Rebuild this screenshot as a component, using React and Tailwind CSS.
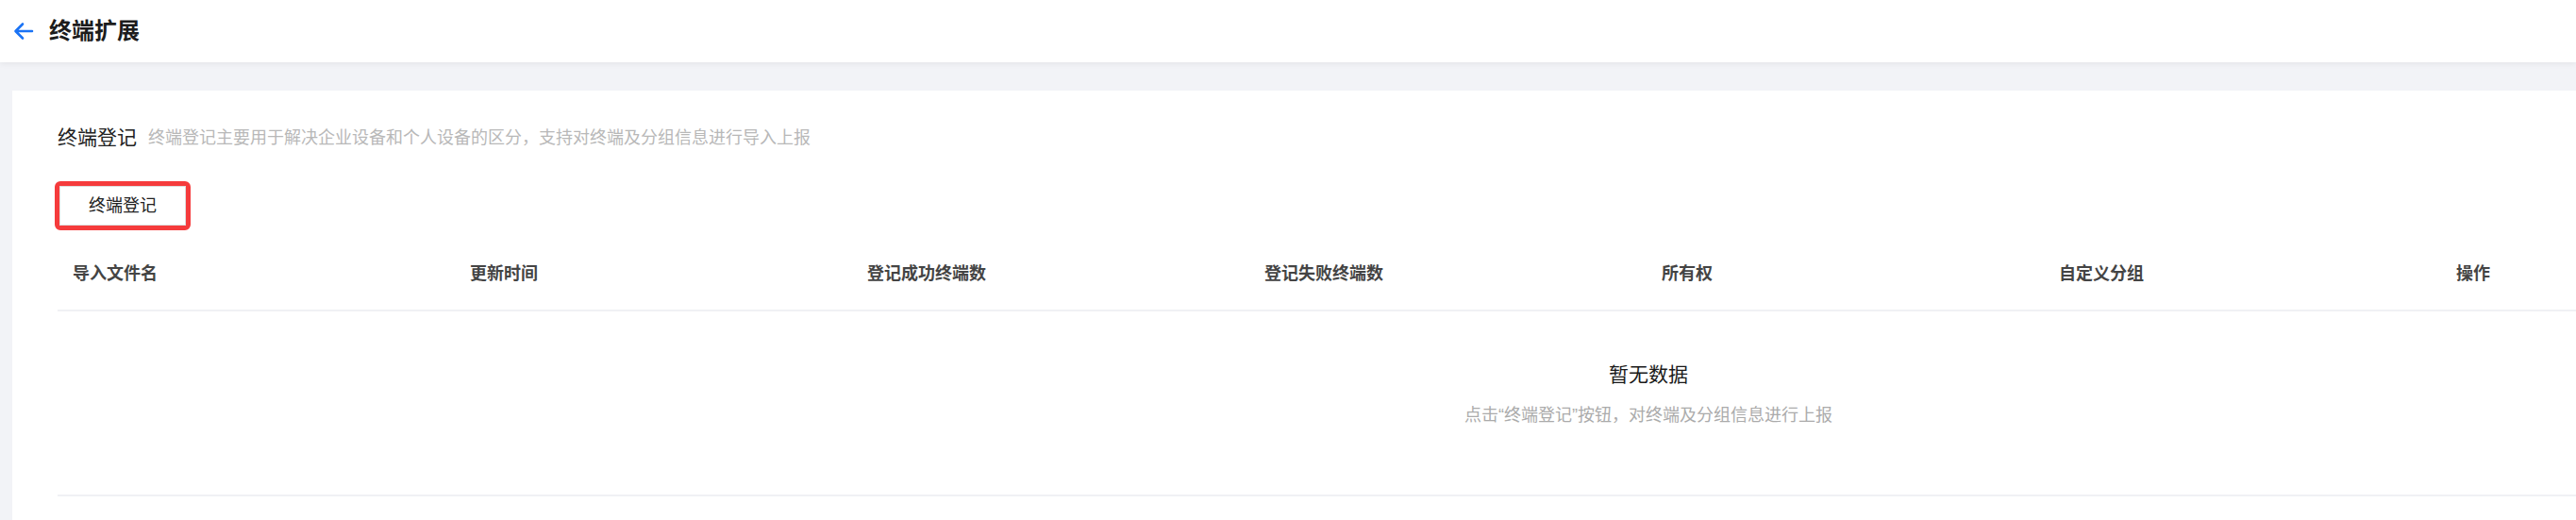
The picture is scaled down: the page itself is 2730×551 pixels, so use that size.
import React from "react";

const cols = ["导入文件名", "更新时间", "登记成功终端数", "登记失败终端数", "所有权", "自定义分组", "操作"];

export default function App() {
  return (
    <div
      className="w-[2730px] h-[551px] overflow-hidden bg-[#f2f3f7]"
      style={{ fontFamily: '"Liberation Sans", "Noto Sans CJK SC", sans-serif' }}
    >
      <header className="relative z-10 h-[66px] bg-white flex items-center shadow-[0_2px_6px_rgba(0,0,0,0.06)]">
        <svg className="ml-[13px]" width="24" height="24" viewBox="0 0 24 24" fill="none">
          <path d="M21 12H4M11 4.5L3.5 12L11 19.5" stroke="#1a73f5" strokeWidth="2.6" strokeLinecap="round" strokeLinejoin="round" />
        </svg>
        <h1 className="ml-[15px] text-[24px] leading-[30px] font-bold text-[#1c1c1c]">终端扩展</h1>
      </header>
      <main className="pt-[30px] pl-[13px]">
        <section className="bg-white h-[460px] pl-[48px] pt-[35px] overflow-hidden">
          <div className="flex items-center h-[30px]">
            <span className="text-[21px] leading-[30px] text-[#222]">终端登记</span>
            <span className="ml-[12px] text-[18px] leading-[30px] text-[#b8b8b8]">
              终端登记主要用于解决企业设备和个人设备的区分，支持对终端及分组信息进行导入上报
            </span>
          </div>
          <div className="mt-[31px] ml-[-3px] w-[144px] border-[5px] border-[#f53b3c] rounded-[6px]">
            <button className="w-[134px] h-[42px] bg-white border border-[#dedede] text-[18px] text-[#222] flex items-center justify-center">
              终端登记
            </button>
          </div>
          <div className="w-[3372px] mt-[8px]">
            <div className="grid grid-cols-[repeat(7,421px)] h-[78px] items-center border-b-2 border-[#f0f1f4]">
              {cols.map((c) => (
                <div key={c} className="pl-[16px] text-[18px] font-semibold text-[#444]">
                  {c}
                </div>
              ))}
            </div>
            <div className="h-[196px] border-b-2 border-[#f0f1f4] flex flex-col items-center pt-[52px]">
              <div className="text-[21px] leading-[30px] text-[#1a1a1a]">暂无数据</div>
              <div className="mt-[15px] text-[18px] leading-[26px] text-[#ababab]">
                点击“终端登记”按钮，对终端及分组信息进行上报
              </div>
            </div>
          </div>
        </section>
      </main>
    </div>
  );
}
